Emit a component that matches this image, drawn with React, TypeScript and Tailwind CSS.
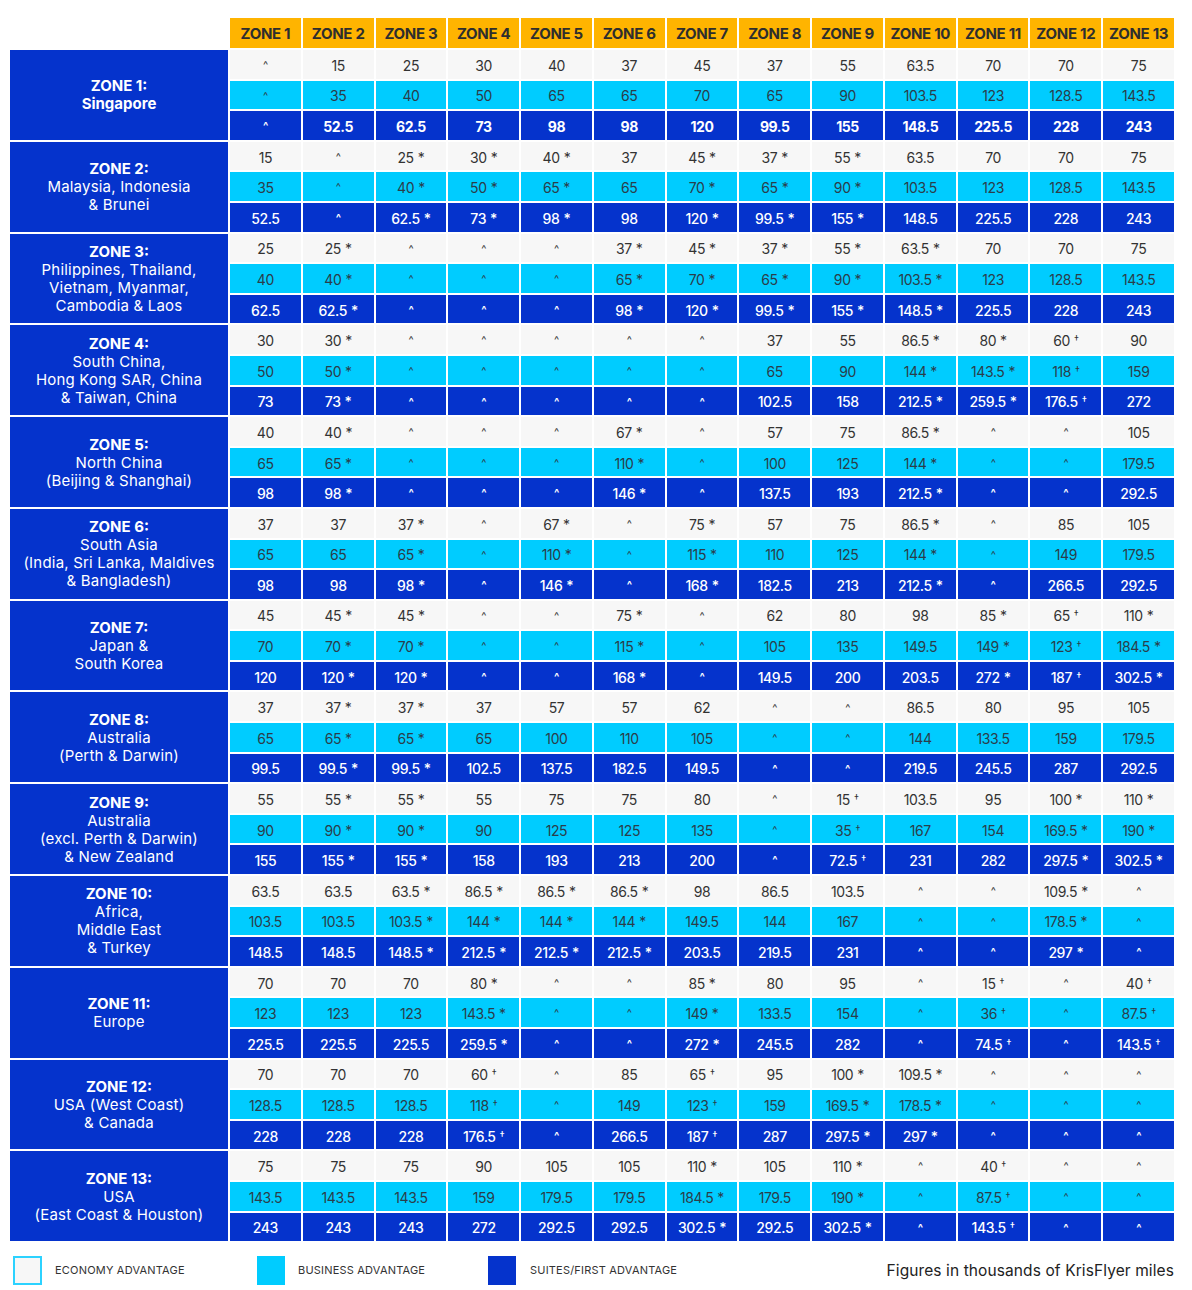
import React from 'react';

type Zone = {
  name: string;
  lines: string[];
  boldLines?: boolean;
  eco: string[];
  bus: string[];
  first: string[];
};

const zones: Zone[] = [
  {
    name: 'ZONE 1:',
    lines: ['Singapore'],
    boldLines: true,
    eco: ['^', '15', '25', '30', '40', '37', '45', '37', '55', '63.5', '70', '70', '75'],
    bus: ['^', '35', '40', '50', '65', '65', '70', '65', '90', '103.5', '123', '128.5', '143.5'],
    first: ['^', '52.5', '62.5', '73', '98', '98', '120', '99.5', '155', '148.5', '225.5', '228', '243'],
  },
  {
    name: 'ZONE 2:',
    lines: ['Malaysia, Indonesia', '& Brunei'],
    eco: ['15', '^', '25*', '30*', '40*', '37', '45*', '37*', '55*', '63.5', '70', '70', '75'],
    bus: ['35', '^', '40*', '50*', '65*', '65', '70*', '65*', '90*', '103.5', '123', '128.5', '143.5'],
    first: ['52.5', '^', '62.5*', '73*', '98*', '98', '120*', '99.5*', '155*', '148.5', '225.5', '228', '243'],
  },
  {
    name: 'ZONE 3:',
    lines: ['Philippines, Thailand,', 'Vietnam, Myanmar,', 'Cambodia & Laos'],
    eco: ['25', '25*', '^', '^', '^', '37*', '45*', '37*', '55*', '63.5*', '70', '70', '75'],
    bus: ['40', '40*', '^', '^', '^', '65*', '70*', '65*', '90*', '103.5*', '123', '128.5', '143.5'],
    first: ['62.5', '62.5*', '^', '^', '^', '98*', '120*', '99.5*', '155*', '148.5*', '225.5', '228', '243'],
  },
  {
    name: 'ZONE 4:',
    lines: ['South China,', 'Hong Kong SAR, China', '& Taiwan, China'],
    eco: ['30', '30*', '^', '^', '^', '^', '^', '37', '55', '86.5*', '80*', '60†', '90'],
    bus: ['50', '50*', '^', '^', '^', '^', '^', '65', '90', '144*', '143.5*', '118†', '159'],
    first: ['73', '73*', '^', '^', '^', '^', '^', '102.5', '158', '212.5*', '259.5*', '176.5†', '272'],
  },
  {
    name: 'ZONE 5:',
    lines: ['North China', '(Beijing & Shanghai)'],
    eco: ['40', '40*', '^', '^', '^', '67*', '^', '57', '75', '86.5*', '^', '^', '105'],
    bus: ['65', '65*', '^', '^', '^', '110*', '^', '100', '125', '144*', '^', '^', '179.5'],
    first: ['98', '98*', '^', '^', '^', '146*', '^', '137.5', '193', '212.5*', '^', '^', '292.5'],
  },
  {
    name: 'ZONE 6:',
    lines: ['South Asia', '(India, Sri Lanka, Maldives', '& Bangladesh)'],
    eco: ['37', '37', '37*', '^', '67*', '^', '75*', '57', '75', '86.5*', '^', '85', '105'],
    bus: ['65', '65', '65*', '^', '110*', '^', '115*', '110', '125', '144*', '^', '149', '179.5'],
    first: ['98', '98', '98*', '^', '146*', '^', '168*', '182.5', '213', '212.5*', '^', '266.5', '292.5'],
  },
  {
    name: 'ZONE 7:',
    lines: ['Japan &', 'South Korea'],
    eco: ['45', '45*', '45*', '^', '^', '75*', '^', '62', '80', '98', '85*', '65†', '110*'],
    bus: ['70', '70*', '70*', '^', '^', '115*', '^', '105', '135', '149.5', '149*', '123†', '184.5*'],
    first: ['120', '120*', '120*', '^', '^', '168*', '^', '149.5', '200', '203.5', '272*', '187†', '302.5*'],
  },
  {
    name: 'ZONE 8:',
    lines: ['Australia', '(Perth & Darwin)'],
    eco: ['37', '37*', '37*', '37', '57', '57', '62', '^', '^', '86.5', '80', '95', '105'],
    bus: ['65', '65*', '65*', '65', '100', '110', '105', '^', '^', '144', '133.5', '159', '179.5'],
    first: ['99.5', '99.5*', '99.5*', '102.5', '137.5', '182.5', '149.5', '^', '^', '219.5', '245.5', '287', '292.5'],
  },
  {
    name: 'ZONE 9:',
    lines: ['Australia', '(excl. Perth & Darwin)', '& New Zealand'],
    eco: ['55', '55*', '55*', '55', '75', '75', '80', '^', '15†', '103.5', '95', '100*', '110*'],
    bus: ['90', '90*', '90*', '90', '125', '125', '135', '^', '35†', '167', '154', '169.5*', '190*'],
    first: ['155', '155*', '155*', '158', '193', '213', '200', '^', '72.5†', '231', '282', '297.5*', '302.5*'],
  },
  {
    name: 'ZONE 10:',
    lines: ['Africa,', 'Middle East', '& Turkey'],
    eco: ['63.5', '63.5', '63.5*', '86.5*', '86.5*', '86.5*', '98', '86.5', '103.5', '^', '^', '109.5*', '^'],
    bus: ['103.5', '103.5', '103.5*', '144*', '144*', '144*', '149.5', '144', '167', '^', '^', '178.5*', '^'],
    first: ['148.5', '148.5', '148.5*', '212.5*', '212.5*', '212.5*', '203.5', '219.5', '231', '^', '^', '297*', '^'],
  },
  {
    name: 'ZONE 11:',
    lines: ['Europe'],
    eco: ['70', '70', '70', '80*', '^', '^', '85*', '80', '95', '^', '15†', '^', '40†'],
    bus: ['123', '123', '123', '143.5*', '^', '^', '149*', '133.5', '154', '^', '36†', '^', '87.5†'],
    first: ['225.5', '225.5', '225.5', '259.5*', '^', '^', '272*', '245.5', '282', '^', '74.5†', '^', '143.5†'],
  },
  {
    name: 'ZONE 12:',
    lines: ['USA (West Coast)', '& Canada'],
    eco: ['70', '70', '70', '60†', '^', '85', '65†', '95', '100*', '109.5*', '^', '^', '^'],
    bus: ['128.5', '128.5', '128.5', '118†', '^', '149', '123†', '159', '169.5*', '178.5*', '^', '^', '^'],
    first: ['228', '228', '228', '176.5†', '^', '266.5', '187†', '287', '297.5*', '297*', '^', '^', '^'],
  },
  {
    name: 'ZONE 13:',
    lines: ['USA', '(East Coast & Houston)'],
    eco: ['75', '75', '75', '90', '105', '105', '110*', '105', '110*', '^', '40†', '^', '^'],
    bus: ['143.5', '143.5', '143.5', '159', '179.5', '179.5', '184.5*', '179.5', '190*', '^', '87.5†', '^', '^'],
    first: ['243', '243', '243', '272', '292.5', '292.5', '302.5*', '292.5', '302.5*', '^', '143.5†', '^', '^'],
  },
];

const font = { fontFamily: 'Inter, "Open Sans", sans-serif' };

function Value({ v, strong }: { v: string; strong?: boolean }) {
  if (v === '^') {
    return <span className={`text-[11px] ${strong ? 'font-bold' : ''}`}>^</span>;
  }
  const marker = v.endsWith('*') ? '*' : v.endsWith('†') ? '†' : '';
  const num = marker ? v.slice(0, -1) : v;
  return (
    <span>
      {num}
      {marker === '*' && <span className="ml-[4px]">*</span>}
      {marker === '†' && <span className="ml-[4px] text-[10px] align-[3px]">†</span>}
    </span>
  );
}

export default function App() {
  return (
    <div className="w-[1192px] h-[1290px] bg-white pt-[18px] pl-[10px]" style={font}>
      <div className="w-[1164px] grid grid-cols-[218px_repeat(13,minmax(0,1fr))] gap-[2px]">
        <div className="h-[30px]" />
        {Array.from({ length: 13 }, (_, i) => (
          <div
            key={i}
            className="h-[30px] pt-[3px] bg-[#ffb400] flex items-center justify-center text-[15px] font-bold text-[#2e2e2e] tracking-[-0.3px]"
          >
            ZONE {i + 1}
          </div>
        ))}

        {zones.map((z, zi) => (
          <React.Fragment key={z.name}>
            <div className="row-span-3 pt-[1px] bg-[#0533cc] text-white flex flex-col items-center justify-center text-center text-[15px] leading-[18px]">
              <div className="font-bold">{z.name}</div>
              {z.lines.map((l) => (
                <div key={l} className={z.boldLines ? 'font-bold' : 'tracking-[0.2px]'}>
                  {l}
                </div>
              ))}
            </div>
            {z.eco.map((v, i) => (
              <div
                key={`e${i}`}
                className="h-[28.6px] pt-[2px] bg-[#f7f7f7] text-[#333] flex items-center justify-center text-[14px] tracking-[-0.4px]"
              >
                <Value v={v} />
              </div>
            ))}
            {z.bus.map((v, i) => (
              <div
                key={`b${i}`}
                className="h-[28.6px] pt-[2px] bg-[#00ccff] text-[#2b3d4a] flex items-center justify-center text-[14px] tracking-[-0.4px]"
              >
                <Value v={v} />
              </div>
            ))}
            {z.first.map((v, i) => (
              <div
                key={`f${i}`}
                className={`h-[28.6px] pt-[2px] bg-[#0533cc] text-white flex items-center justify-center text-[14px] tracking-[-0.4px] ${
                  zi === 0 ? 'font-bold' : 'font-medium'
                }`}
              >
                <Value v={v} strong />
              </div>
            ))}
          </React.Fragment>
        ))}
      </div>

      <div className="w-[1164px] mt-[15px] flex items-center">
        <div className="w-[29px] h-[29px] border-2 border-[#2cd2ff] bg-[#f7f7f7] ml-[3px]" />
        <div className="ml-[13px] w-[202px] text-[11px] text-[#333] tracking-[0.2px]">ECONOMY ADVANTAGE</div>
        <div className="w-[28px] h-[29px] bg-[#00ccff]" />
        <div className="ml-[13px] w-[190px] text-[11px] text-[#333] tracking-[0.2px]">BUSINESS ADVANTAGE</div>
        <div className="w-[28px] h-[29px] bg-[#0533cc]" />
        <div className="ml-[14px] text-[11px] text-[#333] tracking-[0.2px]">SUITES/FIRST ADVANTAGE</div>
        <div className="ml-auto text-[15.5px] tracking-[0.1px] text-[#222]">Figures in thousands of KrisFlyer miles</div>
      </div>
    </div>
  );
}
